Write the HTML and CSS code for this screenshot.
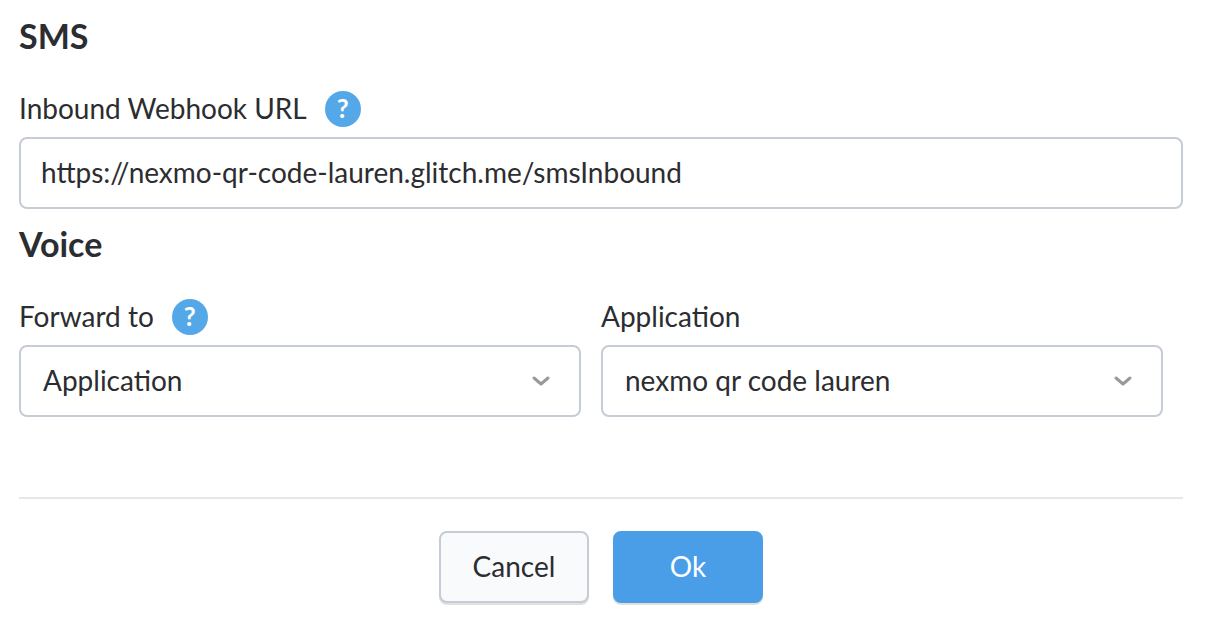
FILE: index.html
```html
<!DOCTYPE html>
<html lang="en">
<head>
<meta charset="utf-8">
<meta name="viewport" content="width=device-width, initial-scale=1">
<title>Edit number</title>
<link rel="stylesheet" href="styles.css">
</head>
<body>
<form class="form">
  <h2 class="heading">SMS</h2>
  <div class="field">
    <div class="label-row">
      <label class="label" for="webhook">Inbound Webhook URL</label>
      <button class="help" type="button" aria-label="Help on inbound webhook">?</button>
    </div>
    <input class="control" id="webhook" type="text" value="https://nexmo-qr-code-lauren.glitch.me/smsInbound">
  </div>
  <h2 class="heading">Voice</h2>
  <div class="columns">
    <div class="field">
      <div class="label-row">
        <label class="label" for="forward">Forward to</label>
        <button class="help" type="button" aria-label="Help on forwarding">?</button>
      </div>
      <div class="select-wrap">
        <select class="control" id="forward"><option>Application</option></select>
        <svg class="chevron" viewBox="0 0 20 12" aria-hidden="true"><path d="M3 3l7 6 7-6"/></svg>
      </div>
    </div>
    <div class="field">
      <div class="label-row"><label class="label" for="app">Application</label></div>
      <div class="select-wrap">
        <select class="control" id="app"><option>nexmo qr code lauren</option></select>
        <svg class="chevron" viewBox="0 0 20 12" aria-hidden="true"><path d="M3 3l7 6 7-6"/></svg>
      </div>
    </div>
  </div>
  <div class="actions">
    <button class="btn btn-cancel" type="button">Cancel</button>
    <button class="btn btn-ok" type="submit">Ok</button>
  </div>
</form>
</body>
</html>
```

FILE: styles.css
```css
* {
  box-sizing: border-box;
}

body {
  margin: 0;
  background: #fff;
  color: #2c2d30;
  font-family: Lato, "Liberation Sans", sans-serif;
  font-size: 28px;
  line-height: 36px;
}

.form {
  padding: 16px 31px 16px 19px;
}

.heading {
  margin: 0;
  font-size: 34px;
  font-weight: 700;
  line-height: 40px;
}

.field {
  padding: 32px 0 15px;
}

.label-row {
  display: flex;
  align-items: center;
  gap: 18px;
  height: 42px;
  margin-bottom: 7px;
}

.label {
  padding-bottom: 2px;
}

.help {
  width: 36px;
  height: 36px;
  padding: 0 0 2px;
  border: 0;
  border-radius: 50%;
  background: #55a8e8;
  color: #fff;
  font-family: inherit;
  font-size: 26px;
  font-weight: 700;
  line-height: 34px;
  text-align: center;
}

.control {
  display: block;
  width: 100%;
  height: 72px;
  padding: 0 20px 2px;
  border: 2px solid #c5ccd7;
  border-radius: 8px;
  background: #fff;
  color: inherit;
  font: inherit;
  appearance: none;
}

.select-wrap {
  position: relative;
}

select.control {
  padding: 0 60px 2px 22px;
}

.chevron {
  position: absolute;
  top: 30px;
  right: 30px;
  width: 20px;
  height: 12px;
  fill: none;
  stroke: #999;
  stroke-width: 3;
  stroke-linecap: round;
  stroke-linejoin: round;
  pointer-events: none;
}

.columns {
  display: grid;
  grid-template-columns: 1fr 1fr;
  gap: 20px;
  padding-right: 20px;
}

.actions {
  display: flex;
  justify-content: center;
  gap: 24px;
  margin-top: 65px;
  padding-top: 32px;
  border-top: 2px solid #e4e8ed;
}

.btn {
  width: 150px;
  height: 72px;
  padding: 0 0 2px;
  border: 2px solid #c5ccd7;
  border-radius: 8px;
  background: #f9fafc;
  color: inherit;
  font: inherit;
  box-shadow: 0 2px 0 rgba(0, 0, 0, 0.12);
}

.btn-ok {
  border-color: #4a9ee8;
  background: #4a9ee8;
  color: #fff;
}
```
